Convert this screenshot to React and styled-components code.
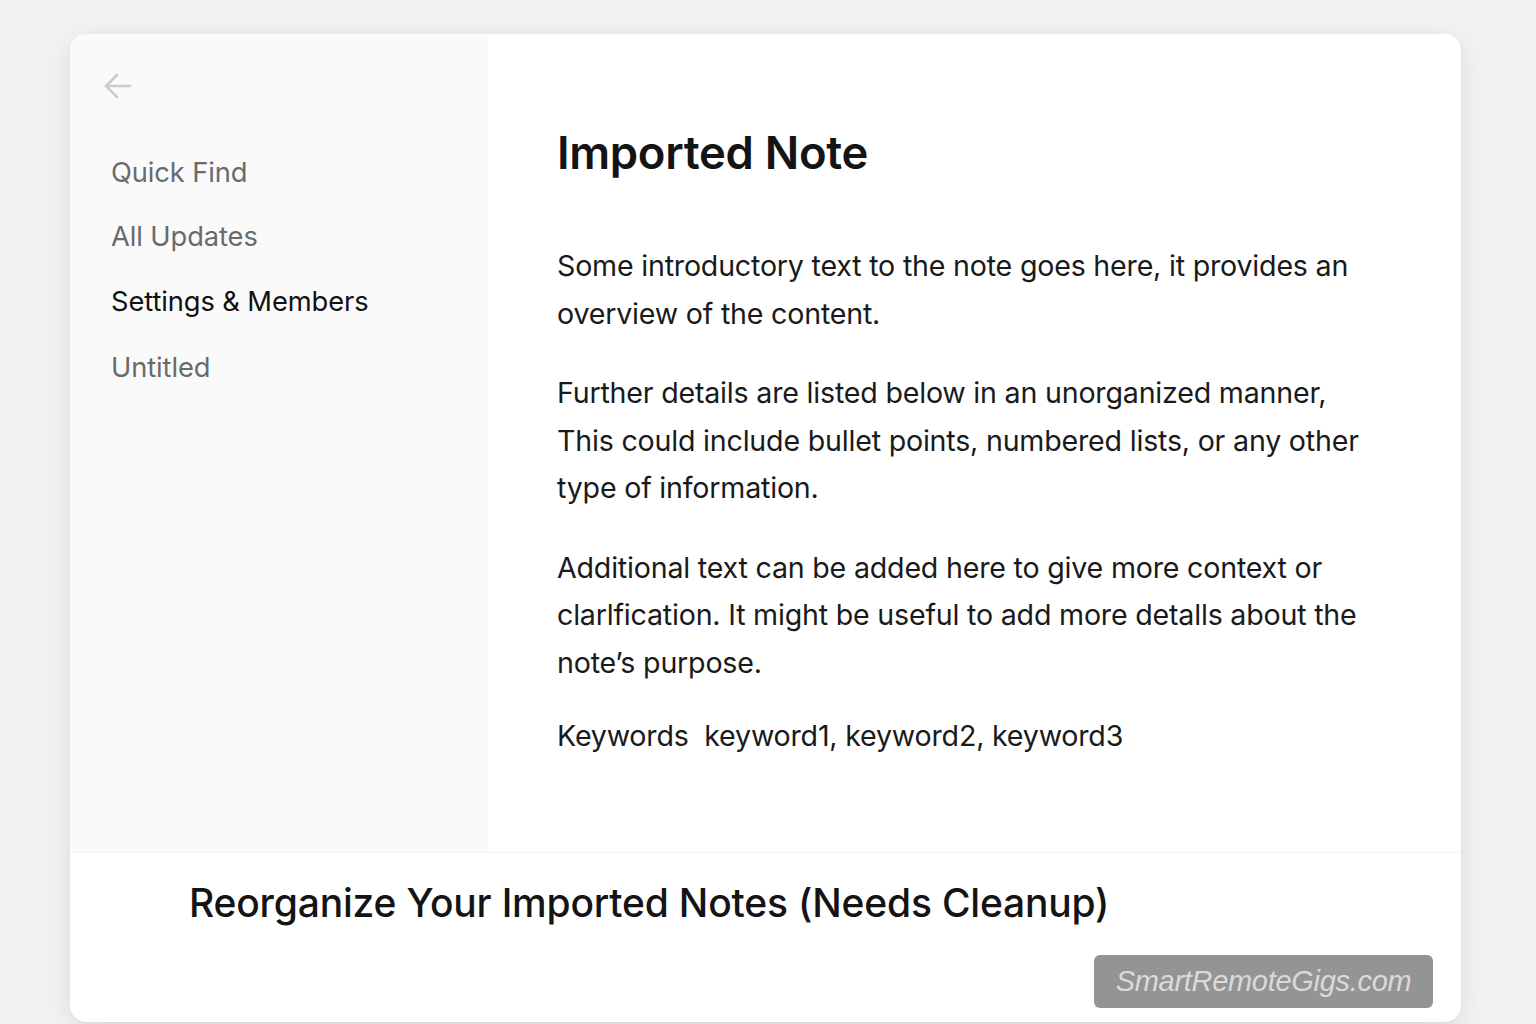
import React from "react";
import styled, { createGlobalStyle } from "styled-components";

const Global = createGlobalStyle`
  html, body { margin: 0; padding: 0; }
  body {
    background: #f2f2f2;
    font-family: Inter, "Noto Sans", "Liberation Sans", sans-serif;
    -webkit-font-smoothing: antialiased;
  }
`;

const Page = styled.div`
  width: 1536px;
  height: 1024px;
  padding: 34px 0 0 70px;
  box-sizing: border-box;
  overflow: hidden;
  position: relative;
`;

const Card = styled.div`
  width: 1391px;
  height: 988px;
  background: #ffffff;
  border-radius: 16px;
  box-shadow: 0 6px 28px rgba(0, 0, 0, 0.09), 0 1px 3px rgba(0, 0, 0, 0.05);
  overflow: hidden;
  display: flex;
  flex-direction: column;
`;

const Top = styled.div`
  display: flex;
  height: 818px;
  border-bottom: 1px solid #f4f4f4;
`;

const Sidebar = styled.aside`
  width: 418px;
  flex-shrink: 0;
  background: #fafafa;
  padding: 38px 0 0 33px;
  box-sizing: border-box;
`;

const BackButton = styled.button`
  display: flex;
  align-items: center;
  justify-content: center;
  width: 30px;
  height: 28px;
  padding: 0;
  border: none;
  background: none;
  color: #cccccc;
  margin-bottom: 40px;
`;

const Nav = styled.nav`
  display: flex;
  flex-direction: column;
  padding-left: 8px;
`;

const NavItem = styled.div`
  height: 64.5px;
  display: flex;
  align-items: center;
  font-size: 27.3px;
  letter-spacing: -0.1px;
  color: ${(p) => (p.$active ? "#111111" : "#6a6a6a")};
  &:last-child {
    margin-top: 2px;
  }
`;

const Main = styled.main`
  flex: 1;
  display: flex;
  flex-direction: column;
  align-items: flex-start;
  padding: 90px 0 0 69px;
  box-sizing: border-box;
`;

const Title = styled.h1`
  margin: 0 0 60px;
  font-size: 45.4px;
  line-height: 58px;
  font-weight: 600;
  color: #141414;
  letter-spacing: -0.3px;
`;

const Para = styled.p`
  margin: 0 0 32px;
  width: 815px;
  font-size: 28.6px;
  line-height: 47.5px;
  color: #1a1a1a;
  letter-spacing: -0.2px;
`;

const Keywords = styled.p`
  margin: 0;
  font-size: 28.6px;
  line-height: 35px;
  color: #1a1a1a;
  white-space: pre;
  letter-spacing: -0.2px;
`;

const Bottom = styled.section`
  flex: 1;
  padding: 22px 0 0 119px;
  box-sizing: border-box;
`;

const BottomTitle = styled.h2`
  margin: 0;
  font-size: 39px;
  line-height: 56px;
  font-weight: 500;
  color: #141414;
  letter-spacing: -0.2px;
`;

const Watermark = styled.div`
  position: absolute;
  left: 1094px;
  top: 955px;
  width: 339px;
  height: 53px;
  border-radius: 6px;
  background: #939595;
  color: #dadada;
  font-family: "Liberation Sans", Arial, sans-serif;
  font-style: italic;
  font-size: 29px;
  display: flex;
  align-items: center;
  justify-content: center;
  letter-spacing: -0.3px;
`;

const ArrowIcon = () => (
  <svg width="30" height="28" viewBox="0 0 30 28" fill="none" stroke="currentColor" strokeWidth="2.6" strokeLinecap="round" strokeLinejoin="round">
    <path d="M27 14H3" />
    <path d="M14 3L3 14l11 11" />
  </svg>
);

const navItems = [
  { label: "Quick Find" },
  { label: "All Updates" },
  { label: "Settings & Members", active: true },
  { label: "Untitled" },
];

export default function App() {
  return (
    <>
      <Global />
      <Page>
        <Card>
          <Top>
            <Sidebar>
              <BackButton aria-label="Back">
                <ArrowIcon />
              </BackButton>
              <Nav>
                {navItems.map((n) => (
                  <NavItem key={n.label} $active={n.active}>
                    {n.label}
                  </NavItem>
                ))}
              </Nav>
            </Sidebar>
            <Main>
              <Title>Imported Note</Title>
              <Para>
                Some introductory text to the note goes here, it provides an overview of the content.
              </Para>
              <Para>
                Further details are listed below in an unorganized manner, This could include bullet points, numbered lists, or any other type of information.
              </Para>
              <Para>
                Additional text can be added here to give more context or clarlfication. It might be useful to add more detalls about the note’s purpose.
              </Para>
              <Keywords>{"Keywords  keyword1, keyword2, keyword3"}</Keywords>
            </Main>
          </Top>
          <Bottom>
            <BottomTitle>Reorganize Your Imported Notes (Needs Cleanup)</BottomTitle>
          </Bottom>
        </Card>
        <Watermark>SmartRemoteGigs.com</Watermark>
      </Page>
    </>
  );
}
